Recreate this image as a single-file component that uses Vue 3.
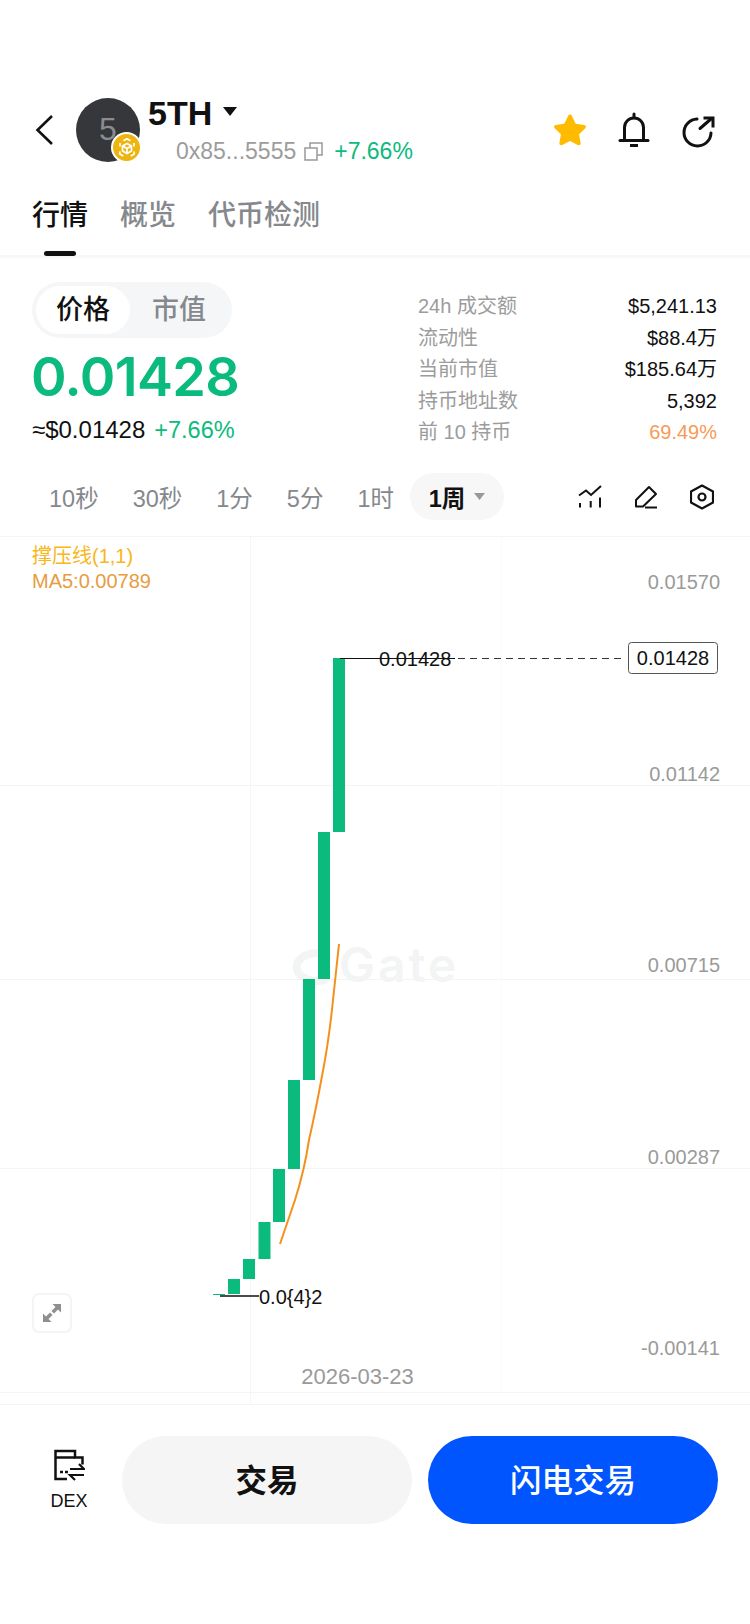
<script setup>
const tabs = ['行情', '概览', '代币检测']
const stats = [
  { label: '24h 成交额', value: '$5,241.13' },
  { label: '流动性', value: '$88.4万' },
  { label: '当前市值', value: '$185.64万' },
  { label: '持币地址数', value: '5,392' },
  { label: '前 10 持币', value: '69.49%', warn: true },
]
const frames = ['10秒', '30秒', '1分', '5分', '1时']
const hLines = [536, 785, 979, 1168, 1392, 1404]
const candles = [
  { x: 213, top: 1294, bottom: 1295 },
  { x: 228, top: 1279, bottom: 1294 },
  { x: 243, top: 1259, bottom: 1279 },
  { x: 258.5, top: 1222, bottom: 1259 },
  { x: 273, top: 1169, bottom: 1222 },
  { x: 288, top: 1080, bottom: 1169 },
  { x: 303, top: 979, bottom: 1080 },
  { x: 318, top: 832, bottom: 979 },
  { x: 333, top: 658, bottom: 832 },
]
const axis = [
  { label: '0.01570', y: 582 },
  { label: '0.01142', y: 774 },
  { label: '0.00715', y: 965 },
  { label: '0.00287', y: 1157 },
  { label: '-0.00141', y: 1348 },
]
const top = 536
</script>

<template>
  <div class="page">
    <header class="head">
      <svg class="back" width="20" height="32" viewBox="0 0 20 32"><path d="M18 2 3.500 16 18 30" fill="none" stroke="#111" stroke-width="2.600" /></svg>
      <div class="avatar">
        <span class="avatar-text">5</span>
        <span class="badge">
          <svg width="24" height="24" viewBox="0 0 24 24" fill="none" stroke="#fff" stroke-width="1.700" stroke-linejoin="round">
            <path d="M12 7.500 16.500 10v5L12 17.600 7.500 15v-5z" />
            <path d="M7.500 10 12 12.600 16.500 10M12 12.600v5" />
            <path d="M8.500 4.800 12 2.800l3.500 2M19 7v3.500M5 7v3.500M19.200 15.500v2.600l-3.500 2M4.800 15.500v2.600l3.500 2" />
          </svg>
        </span>
      </div>
      <div class="token">
        <div class="token-top">
          <span class="symbol">5TH</span>
          <svg width="14" height="9" viewBox="0 0 14 9"><path d="M0 0h14L7 9z" fill="#111" /></svg>
        </div>
        <div class="token-sub">
          <span class="addr">0x85...5555</span>
          <svg width="19" height="19" viewBox="0 0 19 19" fill="none" stroke="#999" stroke-width="1.500"><path d="M1 6h12v12H1zM6 6V1h12v12h-5" /></svg>
          <span class="up">+7.66%</span>
        </div>
      </div>
      <div class="head-actions">
        <svg width="36" height="36" viewBox="0 0 36 36"><path d="M18 2.500c.8 0 1.400.4 1.800 1.200l3.900 8 8.600 1.200c1.600.2 2.200 2.200 1 3.300l-6.200 6 1.500 8.700c.3 1.600-1.400 2.800-2.800 2.100L18 28.900 10.200 33c-1.400.7-3.100-.5-2.800-2.100l1.500-8.700-6.200-6c-1.200-1.100-.6-3.100 1-3.300l8.600-1.200 3.900-8c.4-.8 1-1.200 1.800-1.200z" fill="#ffbb00" /></svg>
        <svg width="36" height="36" viewBox="0 0 36 36" fill="none" stroke="#111" stroke-width="3"><path d="M8.500 28V15.500a9.500 9.500 0 0 1 19 0V28" /><path d="M4 28.500h28" stroke-linecap="round" /><path d="M14 33.500h8" /><path d="M18 2v3" stroke-linecap="round" /></svg>
        <svg width="36" height="36" viewBox="0 0 36 36" fill="none" stroke="#111" stroke-width="3"><path d="M17 7A13.500 13.500 0 1 0 31 21" stroke-linecap="round" /><path d="M20 16.500 31.500 6.500" stroke-linecap="round" /><path d="M23.500 6H33v9.500" stroke-width="3" /></svg>
      </div>
    </header>

    <nav class="tabs">
      <span v-for="(t, i) in tabs" :key="t" class="tab" :class="{ active: i === 0 }">{{ t }}</span>
      <i class="tab-bar"></i>
    </nav>

    <section class="summary">
      <div class="price-col">
        <div class="seg">
          <span class="seg-item on">价格</span>
          <span class="seg-item">市值</span>
        </div>
        <div class="price">0.01428</div>
        <div class="price-sub">
          <span>≈$0.01428</span>
          <span class="up">+7.66%</span>
        </div>
      </div>
      <dl class="stats">
        <div v-for="s in stats" :key="s.label" class="stat">
          <dt>{{ s.label }}</dt>
          <dd :class="{ warn: s.warn }">{{ s.value }}</dd>
        </div>
      </dl>
    </section>

    <section class="frames">
      <span v-for="f in frames" :key="f" class="frame">{{ f }}</span>
      <span class="frame-on">1周<svg width="11" height="7" viewBox="0 0 11 7"><path d="M0 0h11L5.500 7z" fill="#999" /></svg></span>
      <div class="tools">
        <svg width="24" height="24" viewBox="0 0 24 24" fill="none" stroke="#111" stroke-width="2"><path d="M1 10.500 8 5.500l5 4.500L23 1" /><path d="M2 18v4.500M12.700 16v6.500M22 12.500v10" /></svg>
        <svg width="24" height="24" viewBox="0 0 24 24" fill="none" stroke="#111" stroke-width="2"><path d="M2 21.500v-6.500L15 2l7 7-13 12.500z" stroke-linejoin="round" /><path d="M11 22.500h12" /></svg>
        <svg width="24" height="26" viewBox="0 0 24 26" fill="none" stroke="#111" stroke-width="2.200"><path d="M12 1.500 23 7.500v11L12 24.500 1 18.500v-11z" stroke-linejoin="round" /><circle cx="12" cy="13" r="3.500" /></svg>
      </div>
    </section>

    <section class="chart">
      <svg class="chart-svg" width="750" height="880" :viewBox="`0 ${top} 750 880`">
        <line v-for="y in hLines" :key="'h' + y" x1="0" x2="750" :y1="y + 0.5" :y2="y + 0.5" stroke="#f4f4f5" />
        <line x1="250.500" x2="250.500" y1="536" y2="1404" stroke="#f6f6f7" />
        <line x1="501.500" x2="501.500" y1="536" y2="1392" stroke="#fbfbfb" />
        <text x="339" y="982" class="watermark">Gate</text>
        <path d="M327 955A20 14 0 1 0 327 979" fill="none" stroke="#f3f5f5" stroke-width="8" />
        <rect v-for="c in candles" :key="c.x" :x="c.x" :y="c.top" width="12" :height="c.bottom - c.top" fill="#0bbb7d" />
        <path d="M280 1244 295 1200C302 1178 306 1160 309 1140 314 1118 318 1098 322 1076 326 1056 330 1030 333 1000 335 982 337 964 339 944" fill="none" stroke="#f4911e" stroke-width="2" />
        <line x1="340" x2="455" y1="658.500" y2="658.500" stroke="#111" stroke-width="1.200" />
        <line x1="458" x2="624" y1="658.500" y2="658.500" stroke="#333" stroke-dasharray="7 5" />
        <text x="379" y="665.500" class="mark">0.01428</text>
        <line x1="220" x2="259" y1="1296" y2="1296" stroke="#111" stroke-width="1.500" />
        <text x="259" y="1304" class="mark">0.0{4}2</text>
        <rect x="628.500" y="642.500" width="89" height="31" rx="3" fill="#fff" stroke="#555" />
        <text x="673" y="665" text-anchor="middle" class="mark">0.01428</text>
        <text v-for="a in axis" :key="a.label" x="720" :y="a.y + 7" text-anchor="end" class="axis">{{ a.label }}</text>
        <text x="357.500" y="1384" text-anchor="middle" class="axis date">2026-03-23</text>
      </svg>
      <div class="legend">
        <div class="legend-a">撑压线(1,1)</div>
        <div class="legend-b">MA5:0.00789</div>
      </div>
      <button class="expand" aria-label="expand">
        <svg width="20" height="20" viewBox="0 0 20 20" fill="#8f8f8f"><path d="M10.500 1H19v8.500L16 6.500 12 10.500 9.500 8l4-4zM9.500 19H1v-8.500l3 3 4-4L10.500 12l-4 4z" /></svg>
      </button>
    </section>

    <footer class="foot">
      <div class="dex">
        <svg width="32" height="32" viewBox="0 0 32 32" fill="none" stroke="#111" stroke-width="2.500"><path d="M14 30H2.500V2H22v6.500h7.500v7" /><path d="M2.500 8.500H22" /><path d="M7 23h3M12 23h3" /><path d="M17 20h14l-5-5M31 26H17l5 5" stroke-width="2.200" /></svg>
        <span>DEX</span>
      </div>
      <button class="btn ghost">交易</button>
      <button class="btn primary">闪电交易</button>
    </footer>
  </div>
</template>

<style scoped>
.page {
  width: 750px;
  height: 1624px;
  background: #fff;
  padding-top: 98px;
  box-sizing: border-box;
  font-family: "Liberation Sans", "Noto Sans CJK SC", sans-serif;
  color: #111;
  overflow: hidden;
}
.head {
  height: 64px;
  display: flex;
  align-items: center;
  padding: 0 34px;
}
.back { margin-right: 22px; }
.avatar {
  width: 64px;
  height: 64px;
  border-radius: 50%;
  background: #35373b;
  position: relative;
  display: flex;
  align-items: center;
  justify-content: center;
  flex: none;
}
.avatar-text {
  font-size: 32px;
  color: #8b8c8f;
  position: relative;
  top: -1px;
}
.badge {
  position: absolute;
  right: -2px;
  bottom: -1px;
  width: 31px;
  height: 31px;
  box-sizing: border-box;
  border: 2px solid #fff;
  border-radius: 50%;
  background: #eeb40f;
  display: flex;
  align-items: center;
  justify-content: center;
}
.token {
  margin-left: 8px;
  align-self: stretch;
  flex: 1;
}
.token-top {
  display: flex;
  align-items: center;
  gap: 11px;
  height: 30px;
}
.symbol {
  font-size: 34px;
  font-weight: 700;
  line-height: 30px;
}
.token-top svg { margin-top: -4px; }
.token-sub {
  display: flex;
  align-items: center;
  gap: 8px;
  margin: 7px 0 0 28px;
  height: 32px;
}
.addr { font-size: 23px; color: #9c9c9c; }
.up { color: #0bbb7d; font-size: 23px; }
.token-sub .up { margin-left: 3px; }
.head-actions {
  display: flex;
  gap: 28px;
  align-items: center;
}
.tabs {
  height: 93px;
  border-bottom: 3px solid #f7f7f7;
  display: flex;
  gap: 32px;
  padding: 0 32px;
  align-items: flex-start;
  position: relative;
}
.tab {
  font-size: 28px;
  font-weight: 500;
  color: #85888c;
  line-height: 40px;
  margin-top: 34px;
}
.tab.active { color: #111; }
.tab-bar {
  position: absolute;
  left: 44px;
  bottom: -1px;
  width: 32px;
  height: 5px;
  border-radius: 3px;
  background: #111;
}
.summary {
  display: flex;
  justify-content: space-between;
  padding: 24px 33px 0 32px;
  height: 200px;
  box-sizing: border-box;
}
.seg {
  width: 200px;
  height: 56px;
  border-radius: 28px;
  background: #f5f6f7;
  padding: 4px;
  box-sizing: border-box;
  display: flex;
}
.seg-item {
  width: 94px;
  text-align: center;
  font-size: 27px;
  font-weight: 500;
  color: #85888c;
  line-height: 48px;
  border-radius: 24px;
}
.seg-item + .seg-item { margin-left: 2px; }
.seg-item.on { background: #fff; color: #111; }
.price {
  font-family: Inter, sans-serif;
  font-size: 54px;
  font-weight: 600;
  color: #0bbb7d;
  line-height: 60px;
  margin: 9px 0 0 -1px;
  letter-spacing: -0.6px;
}
.price-sub {
  display: flex;
  gap: 9px;
  align-items: center;
  font-size: 24px;
  margin-top: 8px;
  height: 30px;
}
.price-sub .up { font-size: 23.500px; }
.stats {
  width: 299px;
  margin: 9px 0 0;
}
.stat {
  display: flex;
  justify-content: space-between;
  height: 31.500px;
  line-height: 31.500px;
  font-size: 20px;
}
.stat dt { color: #9c9c9c; margin: 0; }
.stat dd { margin: 0; color: #111; }
.stat dd.warn { color: #f79a58; }
.frames {
  height: 47px;
  margin-top: 15px;
  display: flex;
  align-items: center;
  padding: 0 36px 0 49px;
  font-size: 23.500px;
}
.frame {
  color: #85888c;
  margin-right: 34px;
}
.frame-on {
  width: 94px;
  height: 47px;
  margin-left: -18px;
  border-radius: 24px;
  background: #f7f7f7;
  display: flex;
  align-items: center;
  justify-content: center;
  gap: 9px;
  font-weight: 700;
}
.tools {
  margin-left: auto;
  display: flex;
  gap: 32px;
  align-items: center;
}
.chart {
  position: relative;
  height: 868px;
  margin-top: 16px;
}
.chart-svg { display: block; position: absolute; top: 0; left: 0; }
.watermark {
  font: 600 48px Inter, sans-serif;
  letter-spacing: 3px;
  fill: #f3f5f5;
}
.mark { font-size: 20px; fill: #111; }
.axis { font-size: 20px; fill: #9a9a9a; }
.axis.date { font-size: 22px; }
.legend {
  position: absolute;
  left: 32px;
  top: 8px;
  font-size: 20px;
  line-height: 25px;
}
.legend-a { color: #f7b71d; }
.legend-b { color: #e89c42; }
.expand {
  position: absolute;
  left: 32px;
  top: 757px;
  width: 40px;
  height: 40px;
  padding: 0;
  border: 2px solid #f4f4f5;
  border-radius: 7px;
  background: #fff;
  display: flex;
  align-items: center;
  justify-content: center;
}
.foot {
  margin-top: 32px;
  height: 88px;
  display: flex;
  align-items: center;
  padding: 0 32px 0 49px;
}
.dex {
  width: 40px;
  display: flex;
  flex-direction: column;
  align-items: center;
  margin-right: 33px;
  font-size: 18px;
  line-height: 22px;
  gap: 9px;
  flex: none;
}
.btn {
  width: 290px;
  height: 88px;
  border: 0;
  border-radius: 44px;
  padding: 0 0 4px;
  font-family: inherit;
  font-size: 31.500px;
  font-weight: 700;
  flex: none;
}
.ghost { background: #f5f5f5; color: #111; }
.primary { background: #0055ff; color: #fff; margin-left: 16px; font-weight: 500; }
</style>
